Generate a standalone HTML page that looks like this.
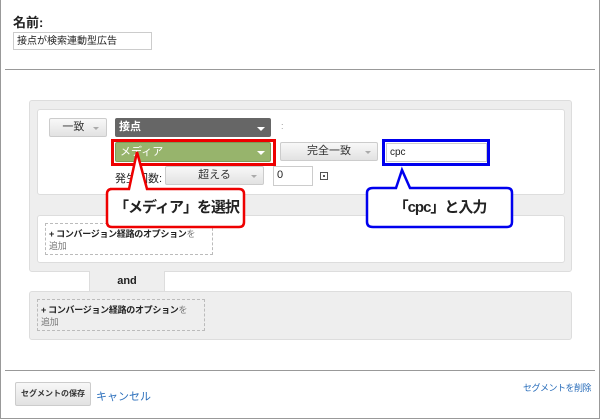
<!DOCTYPE html>
<html><head><meta charset="utf-8"><style>
*{margin:0;padding:0;box-sizing:border-box}
body{width:600px;height:419px;position:relative;background:#fff;font-family:"Liberation Sans","Noto Sans CJK JP",sans-serif;overflow:hidden;color:#222}
.a{position:absolute;white-space:nowrap}
.btn{position:absolute;background:linear-gradient(#f8f8f8,#e2e2e2);border:1px solid #ccc;border-radius:2px;font-size:11px;color:#333;text-align:center;line-height:17px;white-space:nowrap}
.caret{position:absolute;width:0;height:0;border-left:3px solid transparent;border-right:3px solid transparent;border-top:3px solid #aaa}
.wcaret{border-top:4px solid #fff;border-left:4px solid transparent;border-right:4px solid transparent}
.inp{position:absolute;background:#fff;border:1px solid #ccc;font-size:11px;padding-left:3px;line-height:17px}
.dash{position:absolute;border:1px dashed #bbb;font-size:9px;padding:4px 3px;line-height:12px;color:#777;white-space:nowrap;letter-spacing:-0.3px}
.dash b{color:#222}
.top{z-index:5}
</style></head><body>
<div class="a" style="left:0;top:0;width:600px;height:419px;border:1px solid #999;border-top:none"></div>
<div class="a" style="left:13px;top:12px;font-size:13px;font-weight:bold">名前:</div>
<div class="inp" style="left:13px;top:32px;width:139px;height:18px;font-size:10px">接点が検索連動型広告</div>
<div class="a" style="left:5px;top:69px;width:590px;height:1px;background:#999"></div>

<div class="a" style="left:29px;top:100px;width:543px;height:172px;background:#eee;border:1px solid #ddd;border-radius:3px"></div>
<div class="a" style="left:37px;top:109px;width:528px;height:86px;background:#fff;border:1px solid #ddd;border-radius:3px"></div>
<div class="btn" style="left:49px;top:118px;width:58px;height:19px">一致 &nbsp;&nbsp;</div><div class="caret" style="left:93px;top:127px"></div>
<div class="a" style="left:115px;top:118px;width:156px;height:19px;background:#666;border-radius:2px;color:#fff;font-size:11px;font-weight:bold;padding-left:4px;line-height:19px">接点</div><div class="caret wcaret" style="left:257px;top:127px"></div>
<div class="a" style="left:281px;top:121px;font-size:9px;color:#999">:</div>
<div class="a" style="left:111px;top:139px;width:165px;height:27px;border:3px solid #e00"></div>
<div class="a" style="left:115px;top:142px;width:156px;height:20px;background:#97b46c;border:1px solid #7e9a58;border-radius:2px;color:#fff;font-size:11px;padding-left:4px;line-height:18px">メディア</div><div class="caret wcaret" style="left:257px;top:151px"></div>
<div class="btn" style="left:280px;top:142px;width:98px;height:19px">完全一致</div><div class="caret" style="left:365px;top:151px"></div>
<div class="a" style="left:382px;top:139px;width:108px;height:27px;border:3px solid #00e"></div>
<div class="inp" style="left:386px;top:143px;width:101px;height:19px;font-size:10px">cpc</div>
<div class="a" style="left:115px;top:170px;font-size:11px">発生回数:</div>
<div class="btn" style="left:165px;top:166px;width:99px;height:19px">超える</div><div class="caret" style="left:251px;top:175px"></div>
<div class="inp" style="left:273px;top:166px;width:40px;height:20px">0</div>
<div class="a" style="left:320px;top:172px;width:8px;height:8px;border:1px solid #555"><div class="a" style="left:2px;top:2px;width:2px;height:2px;border:1px solid #555"></div></div>

<div class="a" style="left:37px;top:215px;width:528px;height:48px;background:#fff;border:1px solid #ddd;border-radius:3px"></div>
<div class="dash" style="left:45px;top:223px;width:168px;height:32px"><b>+ コンバージョン経路のオプション</b>を<br>追加</div>
<div class="a" style="left:89px;top:271px;width:76px;height:22px;background:#eee;border-left:1px solid #ddd;border-right:1px solid #ddd"></div>
<div class="a" style="left:89px;top:275px;width:76px;text-align:center;font-size:11px;font-weight:bold">and</div>
<div class="a" style="left:29px;top:291px;width:543px;height:49px;background:#eee;border:1px solid #ddd;border-radius:3px"></div>
<div class="dash" style="left:37px;top:299px;width:168px;height:32px"><b>+ コンバージョン経路のオプション</b>を<br>追加</div>

<svg class="a top" style="left:100px;top:140px" width="160" height="92">
<path d="M10,49 H29 L37,12 L47,49 H139 Q144,49 144,54 V82 Q144,87 139,87 H12 Q7,87 7,82 V54 Q7,49 12,49 Z" fill="#fff" stroke="#e00" stroke-width="2.5"/>
</svg>
<div class="a top" style="left:107px;top:196px;width:139px;text-align:center;font-size:15px;font-weight:bold;letter-spacing:-1px">「メディア」を選択</div>
<svg class="a top" style="left:360px;top:160px" width="160" height="72">
<path d="M13,28 H36 L42,10 L50,28 H147 Q152,28 152,33 V62 Q152,67 147,67 H13 Q7,67 7,62 V33 Q7,28 13,28 Z" fill="#fff" stroke="#00e" stroke-width="2.5"/>
</svg>
<div class="a top" style="left:367px;top:196px;width:146px;text-align:center;font-size:15px;font-weight:bold;letter-spacing:-1px">「cpc」と入力</div>

<div class="a" style="left:5px;top:370px;width:590px;height:1px;background:#999"></div>
<div class="btn" style="left:15px;top:382px;width:76px;height:24px;line-height:22px;font-size:8px;font-weight:bold">セグメントの保存</div>
<div class="a" style="left:96px;top:388px;font-size:11px;color:#2a6ebb">キャンセル</div>
<div class="a" style="left:523px;top:381px;font-size:9px;color:#2a6ebb;letter-spacing:-0.5px">セグメントを削除</div>
</body></html>
